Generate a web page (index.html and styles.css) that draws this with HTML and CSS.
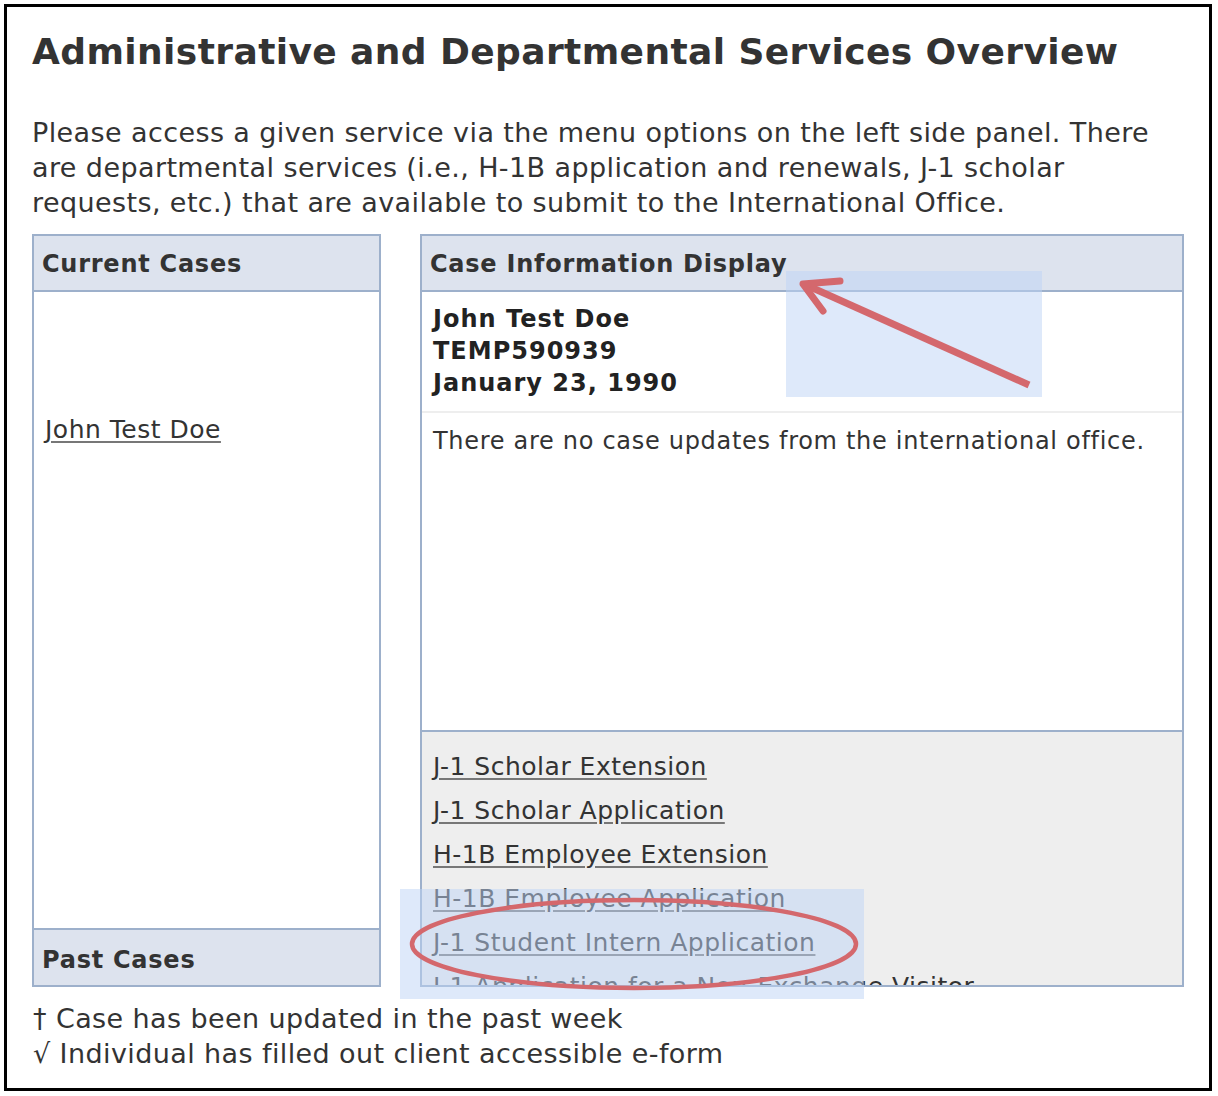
FILE: index.html
```html
<!DOCTYPE html>
<html lang="en">
<head>
<meta charset="utf-8">
<title>Administrative and Departmental Services Overview</title>
<link rel="stylesheet" href="styles.css">
</head>
<body>
<div class="frame">
  <h1 class="title">Administrative and Departmental Services Overview</h1>
  <p class="intro">Please access a given service via the menu options on the left side panel. There<br>are departmental services (i.e., H-1B application and renewals, J-1 scholar<br>requests, etc.) that are available to submit to the International Office.</p>
  <div class="panels">
    <section class="panel cases-panel">
      <div class="panel-head">Current Cases</div>
      <div class="cases-body"><a href="#" class="link">John Test Doe</a></div>
      <div class="panel-head past-head">Past Cases</div>
    </section>
    <section class="panel info-panel">
      <div class="panel-head">Case Information Display</div>
      <div class="info">
        <div class="ident">John Test Doe<br>TEMP590939<br>January 23, 1990</div>
        <div class="updates">There are no case updates from the international office.</div>
      </div>
      <div class="services">
        <a href="#" class="link service">J-1 Scholar Extension</a>
        <a href="#" class="link service">J-1 Scholar Application</a>
        <a href="#" class="link service">H-1B Employee Extension</a>
        <a href="#" class="link service">H-1B Employee Application</a>
        <a href="#" class="link service">J-1 Student Intern Application</a>
        <a href="#" class="link service">J-1 Application for a Non-Exchange Visitor</a>
      </div>
    </section>
  </div>
  <div class="legend">
    <div>&#8224; Case has been updated in the past week</div>
    <div>&#8730; Individual has filled out client accessible e-form</div>
  </div>
</div>
<svg class="annot" width="1218" height="1096" viewBox="0 0 1218 1096" xmlns="http://www.w3.org/2000/svg">
  <rect x="786" y="271" width="256" height="126" fill="rgba(190,212,246,0.5)"/>
  <rect x="400" y="889" width="464" height="110" fill="rgba(190,212,246,0.5)"/>
  <line x1="1029" y1="385" x2="806" y2="285" stroke="#d4686d" stroke-width="7" stroke-linecap="butt"/>
  <polyline points="840,281 803,284 823,311" fill="none" stroke="#d4686d" stroke-width="7" stroke-linecap="round" stroke-linejoin="round"/>
  <ellipse cx="634" cy="944" rx="222" ry="44" fill="none" stroke="#d4686d" stroke-width="4.5"/>
</svg>
</body>
</html>
```
FILE: styles.css
```css
html, body {
  margin: 0;
  padding: 0;
  background: #fff;
}
body {
  position: relative;
  font-family: "DejaVu Sans", Verdana, sans-serif;
  color: #333;
}
.frame {
  margin: 4px 0 0 4px;
  width: 1208px;
  height: 1087px;
  box-sizing: border-box;
  border: 3px solid #000;
  padding: 25px 25px 0 25px;
}
.title {
  margin: 0;
  font-size: 36px;
  line-height: 40px;
  letter-spacing: 0.4px;
  font-weight: bold;
  color: #333;
  white-space: nowrap;
}
.intro {
  margin: 43px 0 0 0;
  font-size: 27px;
  line-height: 35px;
  letter-spacing: 0.4px;
  white-space: nowrap;
}
.panels {
  margin-top: 14px;
  display: flex;
  gap: 39px;
  height: 753px;
}
.panel {
  box-sizing: border-box;
  border: 2px solid #9db0cb;
  display: flex;
  flex-direction: column;
  height: 100%;
}
.cases-panel { width: 349px; }
.info-panel { width: 764px; }
.panel-head {
  height: 54px;
  line-height: 56px;
  padding: 0 8px;
  background: #dde3ee;
  border-bottom: 2px solid #9db0cb;
  font-weight: bold;
  font-size: 24px;
  letter-spacing: 0.75px;
  color: #333;
  white-space: nowrap;
}
.past-head {
  border-bottom: 0;
  border-top: 2px solid #9db0cb;
  height: 55px;
  line-height: 60px;
}
.cases-body {
  flex: 1;
  padding: 122px 11px 0 11px;
  line-height: 32px;
  font-size: 25px;
}
.link {
  color: #333;
  text-decoration: underline;
  text-decoration-color: #777;
  text-underline-offset: 3px;
  font-size: 25px;
  letter-spacing: 0.5px;
}
.info {
  height: 438px;
  display: flex;
  flex-direction: column;
}
.ident {
  padding: 11px 11px 12px 11px;
  font-weight: bold;
  font-size: 24px;
  line-height: 32px;
  letter-spacing: 1px;
  color: #222;
  border-bottom: 2px solid #eeeeee;
}
.updates {
  padding: 12px 11px 0 11px;
  font-size: 24px;
  line-height: 32px;
  letter-spacing: 0.7px;
  white-space: nowrap;
}
.services {
  flex: 1;
  overflow: hidden;
  background: #eeeeee;
  border-top: 2px solid #9db0cb;
  padding: 13px 11px 0 11px;
  display: flex;
  flex-direction: column;
  align-items: flex-start;
}
.service {
  display: block;
  line-height: 44px;
  white-space: nowrap;
}
.legend {
  margin-top: 14px;
  font-size: 27px;
  line-height: 35px;
  letter-spacing: 0.4px;
  padding-left: 1px;
}
.annot {
  position: absolute;
  top: 0;
  left: 0;
  pointer-events: none;
}
```
